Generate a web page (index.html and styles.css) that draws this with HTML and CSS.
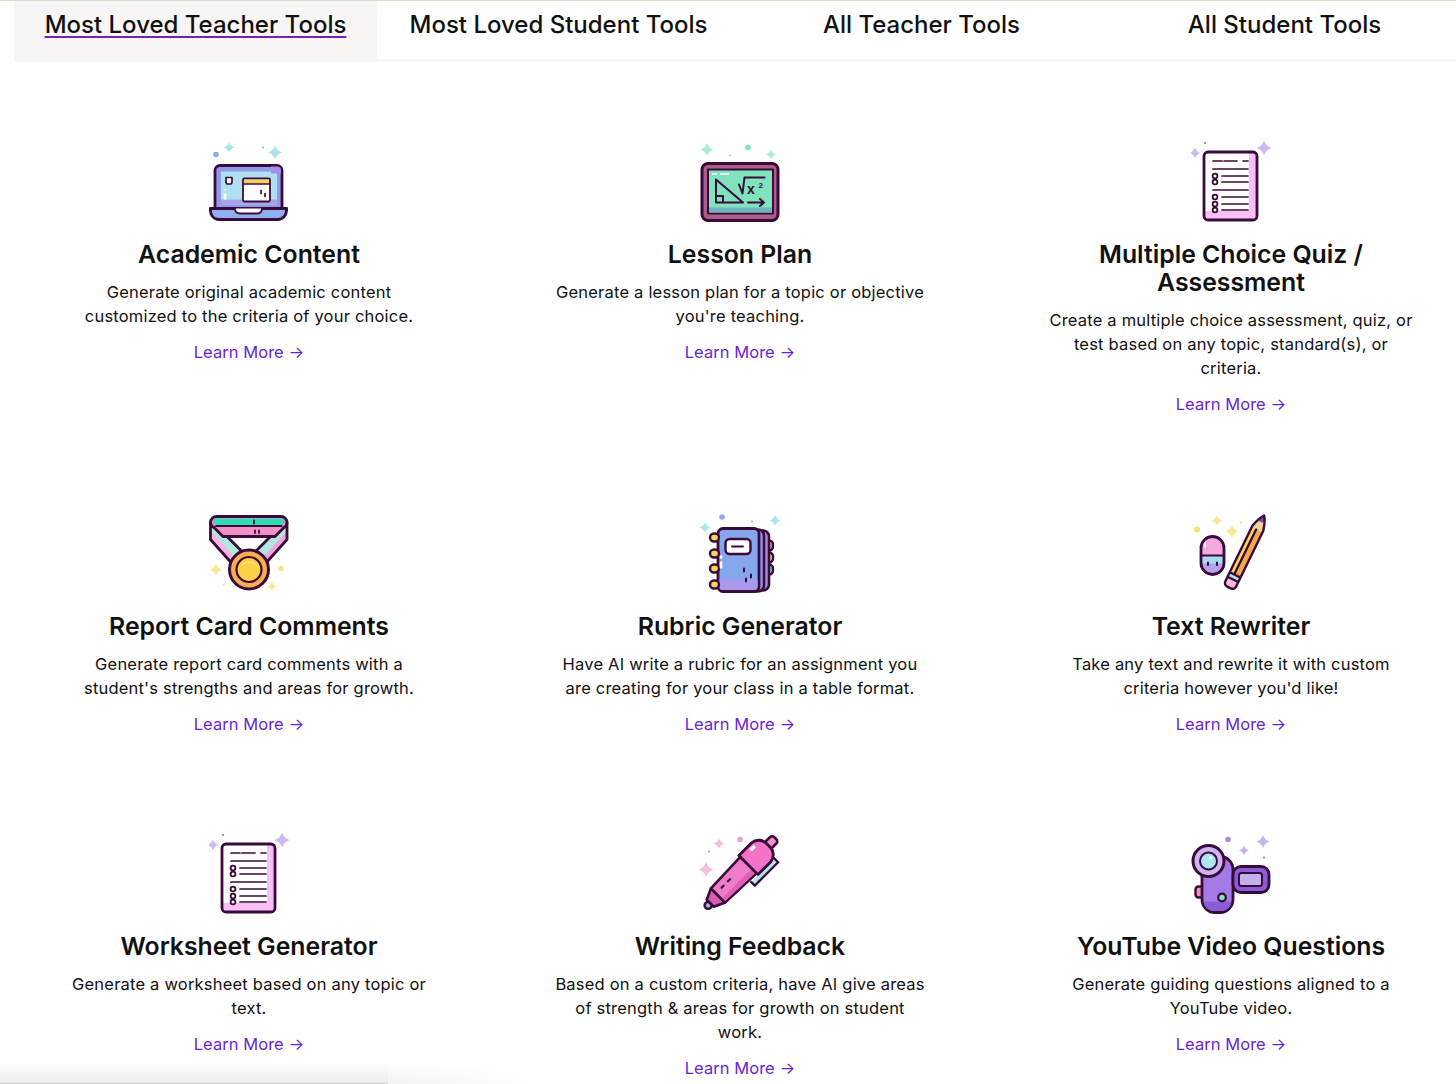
FILE: index.html
```html
<!DOCTYPE html>
<html lang="en">
<head>
    <meta charset="UTF-8">
    <title>Most Loved Teacher Tools</title>
    <link rel="stylesheet" href="styles.css">
</head>
<body>
    <svg class="defs" width="0" height="0" aria-hidden="true">
        <defs>
            <path id="spark" d="M0-10Q2.400-2.400 10 0Q2.400 2.400 0 10Q-2.400 2.400-10 0Q-2.400-2.400 0-10Z"/>
            <symbol id="doc" viewBox="0 0 80 81">
                <use href="#spark" transform="translate(4 12) scale(.55)" fill="#cdb8f2"/>
                <use href="#spark" transform="translate(73 7) scale(.75)" fill="#cdb8f2"/>
                <circle cx="14" cy="2" r="1" fill="#7d6bc9"/>
                <rect x="13" y="11" width="53" height="68" rx="4" fill="#fff"/>
                <path d="M58 12h4a3 3 0 0 1 3 3v60a3 3 0 0 1-3 3H17a3 3 0 0 1-3-3v-5h44z" fill="#f9c0f6"/>
                <rect x="13" y="11" width="53" height="68" rx="4" class="ink" stroke-width="2.800"/>
                <path d="M22 20h9M33 20h13M52 20h5M22 28h35M31 35h26M31 41h26M22 49h35M31 56h26M31 63h26M31 69h26" class="ink" stroke-width="1.700"/>
                <circle cx="24" cy="35" r="2.400" class="ink" stroke-width="1.800"/>
                <circle cx="24" cy="41" r="2.400" class="ink" stroke-width="1.800"/>
                <circle cx="24" cy="56" r="2.400" class="ink" stroke-width="1.800"/>
                <circle cx="24" cy="63" r="2.400" class="ink" stroke-width="1.800"/>
                <circle cx="24" cy="69" r="2.400" class="ink" stroke-width="1.800"/>
            </symbol>
        </defs>
    </svg>

    <nav class="tabs">
        <a class="tab active"><span>Most Loved Teacher Tools</span></a>
        <a class="tab"><span>Most Loved Student Tools</span></a>
        <a class="tab"><span>All Teacher Tools</span></a>
        <a class="tab"><span>All Student Tools</span></a>
    </nav>

    <main class="tools">
        <section class="tool">
            <svg class="icon" viewBox="0 0 80 80">
                <use href="#spark" transform="translate(20 6) scale(.55)" fill="#a6e6ea"/>
                <use href="#spark" transform="translate(66 11) scale(.7)" fill="#a6e6ea"/>
                <circle cx="7" cy="13" r="2.800" fill="#8fa8e8"/>
                <circle cx="54" cy="6" r="1" fill="#8fa8e8"/>
                <rect x="6" y="24" width="67" height="46" rx="5" fill="#8f9bea" class="ink" stroke-width="2.800"/>
                <rect x="12" y="30" width="56" height="33" fill="#aee0f2"/>
                <path d="M12 58h56v5H12z" fill="#a9a2ec"/>
                <path d="M62 25h6a4 4 0 0 1 4 4v3h-10z" fill="#a58fe6"/>
                <rect x="34" y="37" width="27" height="23" rx="1.500" fill="#fff" class="ink" stroke-width="1.800"/>
                <path d="M35 38h25v4H35z" fill="#f7cf5b"/>
                <path d="M34 42.500h27" class="ink" stroke-width="1.400"/>
                <path d="M17 36h6v5l-1 1.500h-4l-1-1.500z" fill="#fff" class="ink" stroke-width="1.700"/>
                <path d="M16 48v1M16 52v6" stroke="#fff" stroke-width="2.600" fill="none"/>
                <path d="M52 49v3M56 52v3" class="ink" stroke-width="1.700"/>
                <path d="M1.300 67h76.400c0 7-4 11-9 11H10c-5 0-8.700-4-8.700-11z" fill="#8fb0ef" class="ink" stroke-width="2.800"/>
                <path d="M26 67c0 3 2 5 5 5h17c3 0 5-2 5-5" fill="#fff" class="ink" stroke-width="1.800"/>
            </svg>
            <h3>Academic Content</h3>
            <p>Generate original academic content<br>customized to the criteria of your choice.</p>
            <a class="more">Learn More →</a>
        </section>

        <section class="tool">
            <svg class="icon" viewBox="0 0 80 80">
                <use href="#spark" transform="translate(7 8) scale(.65)" fill="#a6ecd6"/>
                <use href="#spark" transform="translate(71 13) scale(.5)" fill="#a6ecd6"/>
                <circle cx="48" cy="6" r="2.800" fill="#7fe3c2"/>
                <circle cx="30" cy="14" r="1" fill="#7fe3c2"/>
                <rect x="2" y="22" width="76" height="57" rx="6" fill="#ab5f88" class="ink" stroke-width="3"/>
                <rect x="8" y="28" width="65" height="44" fill="#7fe4bd" class="ink" stroke-width="2"/>
                <path d="M9 66h63v5H9z" fill="#6fb5bb"/>
                <path d="M12 32.500h5M20 32.500h9" stroke="#e6fbf3" stroke-width="2.200" fill="none"/>
                <path d="M16 38v23h27zM16 54.500h7v6.500" class="ink" stroke-width="2"/>
                <path d="M39 43l3.500 9 2-16h20" class="ink" stroke-width="2"/>
                <text x="47" y="52" class="math">x</text>
                <text x="58.500" y="46" class="math small">2</text>
                <path d="M48 61h16M60 57.500l4 3.500-4 3.500" class="ink" stroke-width="2"/>
            </svg>
            <h3>Lesson Plan</h3>
            <p>Generate a lesson plan for a topic or objective<br>you're teaching.</p>
            <a class="more">Learn More →</a>
        </section>

        <section class="tool">
            <svg class="icon"><use href="#doc" width="80" height="81"/></svg>
            <h3>Multiple Choice Quiz /<br>Assessment</h3>
            <p>Create a multiple choice assessment, quiz, or<br>test based on any topic, standard(s), or<br>criteria.</p>
            <a class="more">Learn More →</a>
        </section>

        <section class="tool">
            <svg class="icon" viewBox="0 0 80 80">
                <use href="#spark" transform="translate(7 56) scale(.6)" fill="#fbe88f"/>
                <use href="#spark" transform="translate(63 73) scale(.45)" fill="#fbe88f"/>
                <circle cx="72" cy="55" r="2.600" fill="#fbe36f"/>
                <circle cx="15" cy="71" r="1" fill="#fbe36f"/>
                <path d="M1.500 9v17L23 50l10-12L15 20z" fill="#f9b4e4"/>
                <path d="M78 9v17L56.500 50l-10-12L64.500 20z" fill="#f2a3e0"/>
                <path d="M3 12L33 38l-6 7L2 18zM76.500 12L46.500 38l6 7L77.500 18z" fill="#aeeade"/>
                <path d="M1.500 9v17L23 50l10-12L15 20zM78 9v17L56.500 50l-10-12L64.500 20z" class="ink" stroke-width="2.800"/>
                <path d="M1.500 9a6 6 0 0 1 6-6H72a6 6 0 0 1 6 6c0 2-1 4-3 5l-9 9H14l-9-9c-2-1-3.500-3-3.500-5z" fill="#f28fc6" class="ink" stroke-width="2.800"/>
                <path d="M4 8a3 3 0 0 1 3-3h65.500a3 3 0 0 1 3 3c0 2.500-2 3-4 3.500H8c-2-.5-4-1-4-3.500z" fill="#30dcb6"/>
                <path d="M7 12.500h65.500" class="ink" stroke-width="2.200"/>
                <path d="M45 7v3M46 17v2.500M50 17v2.500" class="ink" stroke-width="1.800"/>
                <circle cx="40" cy="56" r="19.500" fill="#f5b04d" class="ink" stroke-width="3"/>
                <circle cx="40" cy="56" r="12.500" fill="#ffd044" class="ink" stroke-width="2.200"/>
                <path d="M31.500 54a9 9 0 0 1 17 0c-2-3.500-5-5-8.500-5s-6.500 1.500-8.500 5z" fill="#ffeeb0"/>
            </svg>
            <h3>Report Card Comments</h3>
            <p>Generate report card comments with a<br>student's strengths and areas for growth.</p>
            <a class="more">Learn More →</a>
        </section>

        <section class="tool">
            <svg class="icon" viewBox="0 0 80 80">
                <use href="#spark" transform="translate(5 14) scale(.55)" fill="#a6e6ea"/>
                <use href="#spark" transform="translate(75 7) scale(.55)" fill="#a6e6ea"/>
                <circle cx="22" cy="3.500" r="2.800" fill="#8fa8e8"/>
                <circle cx="52" cy="8" r="1" fill="#8fa8e8"/>
                <rect x="61" y="27" width="12" height="10" rx="4" fill="#f28fc6" class="ink" stroke-width="2.400"/>
                <rect x="61" y="39" width="12" height="10" rx="4" fill="#fbdc6a" class="ink" stroke-width="2.400"/>
                <rect x="61" y="51" width="12" height="10" rx="4" fill="#7fe3b5" class="ink" stroke-width="2.400"/>
                <rect x="44" y="17" width="25" height="60" rx="6" fill="#a58fe6" class="ink" stroke-width="2.600"/>
                <rect x="40" y="16" width="24" height="62" rx="6" fill="#8f9bea" class="ink" stroke-width="2.600"/>
                <rect x="18" y="15" width="41" height="63" rx="5" fill="#86a6ee" class="ink" stroke-width="2.800"/>
                <path d="M19.500 66h38v7a3.500 3.500 0 0 1-3.500 3.500H23a3.500 3.500 0 0 1-3.500-3.500z" fill="#a89bec"/>
                <rect x="10" y="20" width="9" height="8" rx="4" fill="#fbd45f" class="ink" stroke-width="2.400"/>
                <rect x="10" y="36" width="9" height="8" rx="4" fill="#fbd45f" class="ink" stroke-width="2.400"/>
                <rect x="10" y="51" width="9" height="8" rx="4" fill="#fbd45f" class="ink" stroke-width="2.400"/>
                <rect x="10" y="67" width="9" height="8" rx="4" fill="#fbd45f" class="ink" stroke-width="2.400"/>
                <rect x="25.500" y="25.500" width="25" height="15" rx="4" fill="#fff" class="ink" stroke-width="2.400"/>
                <path d="M32 33h11" class="ink" stroke-width="2"/>
                <path d="M21 42v3M21 48v7" stroke="#fff" stroke-width="2.600" fill="none"/>
                <path d="M44 55v3M51 61v3M46 65v3" class="ink" stroke-width="2"/>
            </svg>
            <h3>Rubric Generator</h3>
            <p>Have AI write a rubric for an assignment you<br>are creating for your class in a table format.</p>
            <a class="more">Learn More →</a>
        </section>

        <section class="tool">
            <svg class="icon" viewBox="0 0 80 80">
                <use href="#spark" transform="translate(26 7) scale(.55)" fill="#fbe88f"/>
                <use href="#spark" transform="translate(41 18) scale(.65)" fill="#fbe88f"/>
                <circle cx="6" cy="16" r="3" fill="#fbe36f"/>
                <circle cx="50" cy="9" r="1.300" fill="#fbe36f"/>
                <rect x="10" y="23" width="23" height="38" rx="11.500" fill="#f5a8e0"/>
                <path d="M11 42h21v8H11z" fill="#a6dcf2"/>
                <path d="M11 50h21v1a10.500 10.500 0 0 1-21 0z" fill="#b3a2f0"/>
                <path d="M14 29v5" stroke="#fff" stroke-width="2" fill="none"/>
                <path d="M10.500 42h22M17 49v2.500M26 49v2.500" class="ink" stroke-width="2"/>
                <rect x="10" y="23" width="23" height="38" rx="11.500" class="ink" stroke-width="2.800"/>
                <g transform="translate(38 74) rotate(26)">
                    <path d="M-6-66V-4a4 4 0 0 0 4 4h4a4 4 0 0 0 4-4V-66z" fill="#fbd45f"/>
                    <path d="M.5-66v52h5.500v-52z" fill="#f2a94c"/>
                    <path d="M-6-9V-4a4 4 0 0 0 4 4h4a4 4 0 0 0 4-4v-5z" fill="#fbb7dc"/>
                    <path d="M-6-14h12v5h-12z" fill="#aee6ea"/>
                    <path d="M-6-66Q-3-77 0-80Q3-77 6-66Q3-62 0-66Q-3-62-6-66z" fill="#f9cf9d"/>
                    <path d="M-3-74Q-1-78 0-80Q1-78 3-74Q1-72 0-73Q-1-72-3-74z" fill="#7d4bc0"/>
                    <path d="M-6-66V-4a4 4 0 0 0 4 4h4a4 4 0 0 0 4-4V-66Q3-77 0-80Q-3-77-6-66zM-6-14h12M-6-9h12M-1-14V-64" class="ink" stroke-width="2.400"/>
                </g>
            </svg>
            <h3>Text Rewriter</h3>
            <p>Take any text and rewrite it with custom<br>criteria however you'd like!</p>
            <a class="more">Learn More →</a>
        </section>

        <section class="tool">
            <svg class="icon"><use href="#doc" width="80" height="81"/></svg>
            <h3>Worksheet Generator</h3>
            <p>Generate a worksheet based on any topic or<br>text.</p>
            <a class="more">Learn More →</a>
        </section>

        <section class="tool">
            <svg class="icon" viewBox="0 0 80 80">
                <use href="#spark" transform="translate(19 10) scale(.55)" fill="#f7bfe2"/>
                <use href="#spark" transform="translate(6 36) scale(.75)" fill="#f7bfe2"/>
                <circle cx="40" cy="6" r="2.800" fill="#ea9fce"/>
                <circle cx="9" cy="18" r="1" fill="#d77fb6"/>
                <g transform="translate(6 74) rotate(45)">
                    <path d="M13-83h6v33h-5" fill="#b6e6f0" class="ink" stroke-width="2.400"/>
                    <rect x="-4.500" y="-98" width="9" height="12" rx="3" fill="#f28fc6" class="ink" stroke-width="2.600"/>
                    <circle cx="0" cy="-3" r="3.500" fill="#8fb8f0" class="ink" stroke-width="2.400"/>
                    <path d="M-10-17L-5-6H5L10-17z" fill="#d95bb4" class="ink" stroke-width="2.600"/>
                    <path d="M-10-17L-11.500-60H11.500L10-17z" fill="#ee7cc8" class="ink" stroke-width="2.600"/>
                    <path d="M5-59h5.500L9-18.500H5z" fill="#e05fbc"/>
                    <path d="M-13.500-60V-78a11 11 0 0 1 11-10h5a11 11 0 0 1 11 10V-60z" fill="#f472c8" class="ink" stroke-width="2.800"/>
                    <path d="M-9-72v-6" stroke="#fff" stroke-width="3.400" fill="none"/>
                    <path d="M-3-37v3M-3-28v3" class="ink" stroke-width="2.200"/>
                </g>
            </svg>
            <h3>Writing Feedback</h3>
            <p>Based on a custom criteria, have AI give areas<br>of strength &amp; areas for growth on student<br>work.</p>
            <a class="more">Learn More →</a>
        </section>

        <section class="tool">
            <svg class="icon" viewBox="0 0 80 80">
                <use href="#spark" transform="translate(72 8) scale(.65)" fill="#c9b3ee"/>
                <use href="#spark" transform="translate(53 17) scale(.5)" fill="#c9b3ee"/>
                <circle cx="37" cy="6" r="2.800" fill="#a98be0"/>
                <circle cx="73" cy="24" r="1" fill="#8a6bd0"/>
                <rect x="4.500" y="53" width="8" height="11" rx="3" fill="#f191b8" class="ink" stroke-width="2.400"/>
                <rect x="11" y="23" width="31" height="56" rx="13" fill="#a47be6" class="ink" stroke-width="2.800"/>
                <path d="M12.500 68h28a10 10 0 0 1-10 9.500h-8a10 10 0 0 1-10-9.500z" fill="#8a5cd6"/>
                <circle cx="31" cy="64" r="3.800" fill="#7fe3bd" class="ink" stroke-width="2.200"/>
                <rect x="42" y="33" width="36" height="26" rx="8" fill="#8a5cd6" class="ink" stroke-width="2.800"/>
                <rect x="48" y="39.500" width="23" height="13" rx="2.500" fill="#c5b0ee" class="ink" stroke-width="2"/>
                <circle cx="17.500" cy="27.500" r="15.500" fill="#cbb6f0" class="ink" stroke-width="3"/>
                <circle cx="17.500" cy="27.500" r="8.500" fill="#a8e6f0" class="ink" stroke-width="2"/>
                <circle cx="20" cy="24.500" r="1.500" fill="#fff"/>
            </svg>
            <h3>YouTube Video Questions</h3>
            <p>Generate guiding questions aligned to a<br>YouTube video.</p>
            <a class="more">Learn More →</a>
        </section>
    </main>

    <div class="edge-shadow"></div>
</body>
</html>
```

FILE: styles.css
```css
html, body {
    height: 100%;
}
body {
    margin: 0;
    background: #fff;
    color: #111;
    font-family: Inter, "Open Sans", sans-serif;
    overflow: hidden;
    position: relative;
}
.defs {
    position: absolute;
}
.ink {
    stroke: #3a0a3a;
    stroke-linecap: round;
    stroke-linejoin: round;
}
path.ink:not([fill]), rect.ink:not([fill]), circle.ink:not([fill]) {
    fill: none;
}
.math {
    font-family: "Liberation Sans", sans-serif;
    font-size: 14px;
    font-weight: 700;
    fill: #3a0a3a;
}
.math.small {
    font-size: 8px;
}
.tabs {
    display: flex;
    width: 1466px;
    margin-left: 14px;
    padding-top: 1px;
    height: 62px;
    box-sizing: border-box;
    position: relative;
}
.tabs::before {
    content: "";
    position: absolute;
    top: 0;
    left: -14px;
    width: 1456px;
    height: 1px;
    background: #dedacd;
}
.tab {
    flex: 0 0 363px;
    box-sizing: border-box;
    text-align: center;
    font-size: 24px;
    font-weight: 500;
    line-height: 30px;
    padding-top: 9px;
    border-bottom: 3px solid #fbf6f1;
    height: 61px;
}
.tab.active {
    background: #f8f6f4;
    border-bottom-color: #f8f6f4;
}
.tab.active span {
    text-decoration: underline;
    text-decoration-color: #7a20b4;
    text-decoration-thickness: 2px;
    text-underline-offset: 3px;
}
.tools {
    display: grid;
    grid-template-columns: repeat(3, 395px);
    column-gap: 96px;
    row-gap: 97px;
    padding: 79px 0 0 51.5px;
}
.tool {
    display: flex;
    flex-direction: column;
    align-items: center;
    text-align: center;
}
.icon {
    width: 80px;
    height: 81px;
    overflow: visible;
    margin-bottom: 17.5px;
    flex: none;
}
.tool h3 {
    margin: 0 0 12.5px;
    font-size: 24.8px;
    font-weight: 600;
    line-height: 28px;
}
.tool p {
    margin: 0 0 12px;
    font-size: 16.5px;
    line-height: 24px;
    letter-spacing: 0.2px;
}
.more {
    font-size: 16.5px;
    line-height: 24px;
    letter-spacing: 0.05px;
    color: #6a1fd8;
}
.edge-shadow {
    position: absolute;
    left: 0;
    bottom: 0;
    width: 388px;
    height: 21px;
    background: linear-gradient(#fff0, #ececec);
    border-bottom: 1px solid #cfcfcf;
}
.edge-shadow::after {
    content: "";
    position: absolute;
    left: 100%;
    top: 0;
    bottom: -1px;
    width: 150px;
    background: linear-gradient(#fff0, #f2f2f2);
    mask-image: linear-gradient(to right, #000, #0000);
}
```
